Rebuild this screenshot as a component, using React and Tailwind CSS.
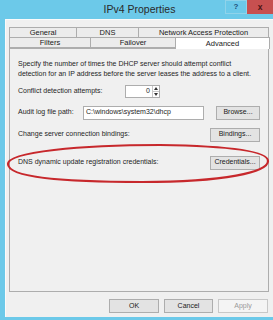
import React from 'react';

const font = { fontFamily: '"Liberation Sans", Arial, sans-serif' };

function Tab({ label, w, selected, first }) {
  return (
    <div
      className={`flex items-center justify-center text-[7.5px] text-[#1a1a1a] border border-[#adadad] ${
        first ? '' : '-ml-px'
      } ${selected ? 'bg-white border-b-0 h-[12px] -mb-px relative z-10' : 'bg-[#ececec] h-[11px]'}`}
      style={{ width: w }}
    >
      {label}
    </div>
  );
}

function Btn({ children, w, disabled }) {
  return (
    <div
      className={`h-[14px] flex items-center justify-center text-[7px] border ${
        disabled ? 'bg-[#f4f4f4] border-[#c8c8c8] text-[#9a9a9a]' : 'bg-[#e3e3e3] border-[#adadad] text-[#1a1a1a]'
      }`}
      style={{ width: w }}
    >
      {children}
    </div>
  );
}

export default function App() {
  return (
    <div className="relative w-[273px] h-[320px] bg-[#6cc9e9] flex flex-col overflow-hidden" style={font}>
      {/* title bar */}
      <div className="h-[19px] flex shrink-0">
        <div className="flex-1 pl-[54px] text-center text-[10.5px] leading-[19px] text-[#2a2a2a]">IPv4 Properties</div>
        <div className="w-[22px] h-[14px] border border-[#8fd3ea] flex items-center justify-center text-[8px] font-bold text-[#1d4d7a]">?</div>
        <div className="w-[26px] h-[14px] bg-[#c75050] flex items-center justify-center text-[8.5px] font-bold text-[#4a1414]">x</div>
      </div>

      {/* dialog body */}
      <div className="flex-1 ml-[5px] mb-[3px] bg-[#f0f0f0] border-l border-t border-[#fafafa] pt-[7px] pl-[3px] flex flex-col">
        <div className="flex">
          <Tab label="General" w={68} first />
          <Tab label="DNS" w={63} />
          <Tab label="Network Access Protection" w={131} />
        </div>
        <div className="flex -mt-px">
          <Tab label="Filters" w={82} first />
          <Tab label="Failover" w={86} />
          <Tab label="Advanced" w={95} selected />
        </div>

        {/* tab page */}
        <div className="w-[260px] h-[244px] border border-[#adadad] bg-[#f0f0f0] pt-[10px] pl-[8px] pr-[8px] text-[7px] text-[#1e1e1e]">
          <p className="leading-[10px]">
            Specify the number of times the DHCP server should attempt conflict detection for an IP address before the server leases the address to a client.
          </p>

          <div className="flex items-center h-[13px] mt-[6px]">
            <span className="w-[107px]">Conflict detection attempts:</span>
            <div className="w-[35px] h-[13px] bg-white border border-[#adadad] flex items-center justify-end">
              <span className="mr-[2px]">0</span>
              <div className="w-[7px] h-full flex flex-col border-l border-[#c8c8c8]">
                <div className="flex-1 flex items-center justify-center border-b border-[#c8c8c8]">
                  <svg width="4" height="3" viewBox="0 0 4 3"><path d="M0 3 L2 0 L4 3 Z" fill="#333" /></svg>
                </div>
                <div className="flex-1 flex items-center justify-center">
                  <svg width="4" height="3" viewBox="0 0 4 3"><path d="M0 0 L2 3 L4 0 Z" fill="#333" /></svg>
                </div>
              </div>
            </div>
          </div>

          <div className="flex items-center h-[15px] mt-[7px]">
            <span className="w-[65px]">Audit log file path:</span>
            <div className="w-[121px] h-[14px] bg-white border border-[#adadad] flex items-center pl-[2px]">C:\windows\system32\dhcp</div>
            <div className="flex-1" />
            <Btn w={44}>Browse...</Btn>
          </div>

          <div className="flex items-center h-[15px] mt-[7px]">
            <span className="flex-1">Change server connection bindings:</span>
            <Btn w={50}>Bindings...</Btn>
          </div>

          <div className="flex items-center h-[15px] mt-[13px]">
            <span className="flex-1">DNS dynamic update registration credentials:</span>
            <Btn w={50}>Credentials...</Btn>
          </div>
        </div>

        {/* dialog buttons */}
        <div className="flex justify-end gap-[5px] pr-[5px] mt-[7px]">
          <Btn w={50}>OK</Btn>
          <Btn w={49}>Cancel</Btn>
          <Btn w={50} disabled>Apply</Btn>
        </div>
      </div>

      {/* red annotation ellipse */}
      <svg className="absolute inset-0 pointer-events-none" width="273" height="320" viewBox="0 0 273 320">
        <path
          d="M8 164 C8 152 80 145 160 145 C228 146 268 151 268 161 C268 172 225 182 142 182 C62 182 8 177 8 164 Z"
          fill="none"
          stroke="#c7282c"
          strokeWidth="2.2"
        />
      </svg>
    </div>
  );
}
